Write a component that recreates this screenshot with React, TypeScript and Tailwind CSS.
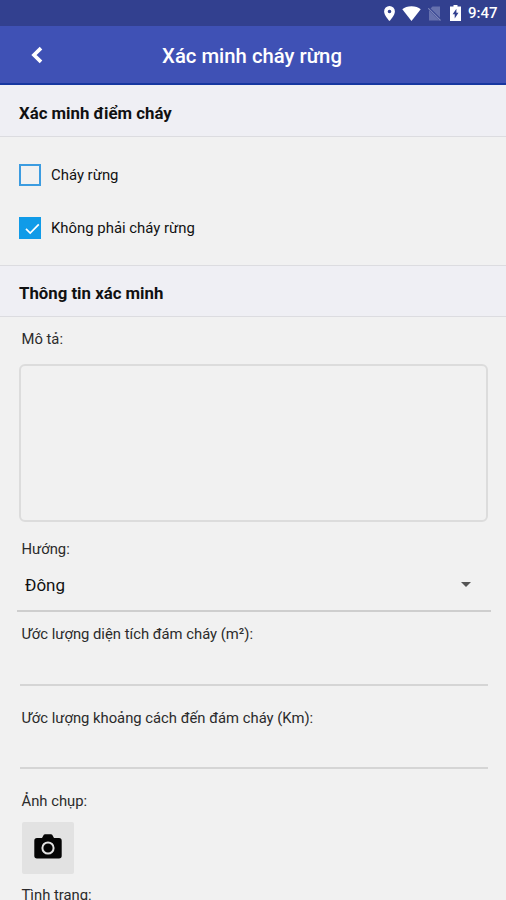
import { useState } from 'react'

const verifyOptions = ['Cháy rừng', 'Không phải cháy rừng']

function StatusBar() {
  return (
    <div className="flex h-[26px] shrink-0 items-center justify-end bg-[#32408f] pr-2 text-white">
      <svg className="mr-[7px] h-[15px] w-[11px]" viewBox="0 0 11 15" fill="currentColor">
        <path
          fillRule="evenodd"
          d="M5.5 0A5.4 5.4 0 0 0 .1 5.4C.1 9.3 5.5 15 5.5 15s5.4-5.7 5.4-9.6A5.4 5.4 0 0 0 5.5 0Zm0 3.7a1.8 1.8 0 1 1 0 3.6 1.8 1.8 0 0 1 0-3.6Z"
        />
      </svg>
      <svg className="mr-[7px] h-[15px] w-[19px]" viewBox="0 0 19 15" fill="currentColor">
        <path d="M9.5 15 .3 3.3C2.5 1.4 5.7.3 9.5.3s7 1.1 9.2 3Z" />
      </svg>
      <svg className="mr-[9px] h-[15px] w-[13px]" viewBox="0 0 13 15">
        <path d="M4.5.6H12v14H1V4Z" fill="#6671ae" />
        <path d="m0 1.5 13 13" stroke="#32408f" strokeWidth="2.4" />
        <path d="m.3 2.3 12.2 12.2" stroke="#7f88bb" strokeWidth="1.1" />
      </svg>
      <svg className="mr-[7px] h-4 w-[11px]" viewBox="0 0 11 16">
        <path d="M3.5 0h4v1.6H11V16H0V1.6h3.5Z" fill="currentColor" />
        <path d="M6.4 3.8 2.6 9.3h2.1v4.2l3.8-5.7H6.4Z" fill="#32408f" />
      </svg>
      <span className="w-[30px] pt-px text-[15px] leading-[25px] font-medium">9:47</span>
    </div>
  )
}

function SectionTitle({ title, className }: { title: string; className: string }) {
  return (
    <h2 className={`flex shrink-0 items-center border-[#dcdce0] bg-[#efeff4] pl-[19px] text-[16.8px] font-bold ${className}`}>
      {title}
    </h2>
  )
}

function Label({ children }: { children: string }) {
  return <div className="h-5 shrink-0 pl-[21.5px] text-[14.8px] leading-5 text-[#2b2b2b]">{children}</div>
}

export default function App() {
  const [selected, setSelected] = useState(1)

  return (
    <div className="flex h-[900px] w-full flex-col overflow-hidden bg-[#f1f1f1] font-['Roboto',sans-serif] text-[#111]">
      <StatusBar />

      {/* App bar */}
      <header className="grid h-[59px] shrink-0 grid-cols-[72px_1fr_72px] items-center border-b-2 border-[#1737a0] bg-[#3f51b5] text-white">
        <button className="pl-[30px]">
          <svg className="h-[18px] w-[13px]" viewBox="0 0 13 18" fill="none" stroke="currentColor" strokeWidth="3.7">
            <path d="M11 2.2 4 9l7 6.8" />
          </svg>
        </button>
        <h1 className="pt-1 pr-0.5 text-center text-[20.3px] font-medium whitespace-nowrap">Xác minh cháy rừng</h1>
      </header>

      <SectionTitle title="Xác minh điểm cháy" className="h-[52px] border-b pt-[7px]" />

      <div className="flex h-32 shrink-0 flex-col gap-[31px] pt-[27px] pl-[19px]">
        {verifyOptions.map((option, i) => (
          <button key={option} onClick={() => setSelected(i)} className="flex h-[22px] items-center gap-2.5 text-left text-[14.9px]">
            <span className={`flex size-[22px] items-center justify-center border-2 ${i === selected ? 'border-[#109be8] bg-[#109be8]' : 'border-[#3c9ce0]'}`}>
              {i === selected && (
                <svg className="mt-0.5 ml-1 h-3 w-[15px] shrink-0" viewBox="0 0 15 12" fill="none" stroke="white" strokeWidth="1.7">
                  <path d="m1 5.8 4.2 4.2 8.6-8.7" />
                </svg>
              )}
            </span>
            <span className="pt-px">{option}</span>
          </button>
        ))}
      </div>

      <SectionTitle title="Thông tin xác minh" className="h-[52px] border-y pt-[5px]" />

      <div className="flex shrink-0 flex-col pt-3">
        <Label>Mô tả:</Label>
        <textarea className="mx-[19px] mt-[15px] h-[158px] w-[469px] resize-none rounded-md border-2 border-[#dcdcdc] outline-none" />

        <div className="mt-[17px]">
          <Label>Hướng:</Label>
        </div>
        <div className="mr-[15px] ml-[17px] flex h-[53px] items-center justify-between border-b-2 border-[#cecece] pr-5 pl-2 text-[17px]">
          <span className="pt-0.5">Đông</span>
          <svg className="h-[5px] w-2.5" viewBox="0 0 10 5" fill="#555">
            <path d="M0 0h10L5 5Z" />
          </svg>
        </div>

        <div className="mt-3">
          <Label>Ước lượng diện tích đám cháy (m²):</Label>
          <input className="mx-5 block h-[42px] w-[468px] border-b-2 border-[#d5d5d5] outline-none" />
        </div>
        <div className="mt-[22px]">
          <Label>Ước lượng khoảng cách đến đám cháy (Km):</Label>
          <input className="mx-5 block h-[41px] w-[468px] border-b-2 border-[#d5d5d5] outline-none" />
        </div>

        <div className="mt-[22px]">
          <Label>Ảnh chụp:</Label>
          <button className="mt-[11px] ml-[22px] flex h-[52px] w-[52px] items-center justify-center rounded-xs bg-[#e2e2e2] pb-[3px]">
            <svg className="h-[25px] w-7" viewBox="0 0 28 25">
              <path d="M3 4h5l1.8-3.2Q10.2.2 11 .2h6q.8 0 1.2.6L20 4h5q2.7 0 2.7 2.7v15q0 2.7-2.7 2.7H3Q.3 24.4.3 21.7v-15Q.3 4 3 4Z" fill="#050505" />
              <circle cx="14" cy="14" r="5.6" fill="none" stroke="#e2e2e2" strokeWidth="2" />
            </svg>
          </button>
        </div>
        <div className="mt-[11px]">
          <Label>Tình trạng:</Label>
        </div>
      </div>
    </div>
  )
}
